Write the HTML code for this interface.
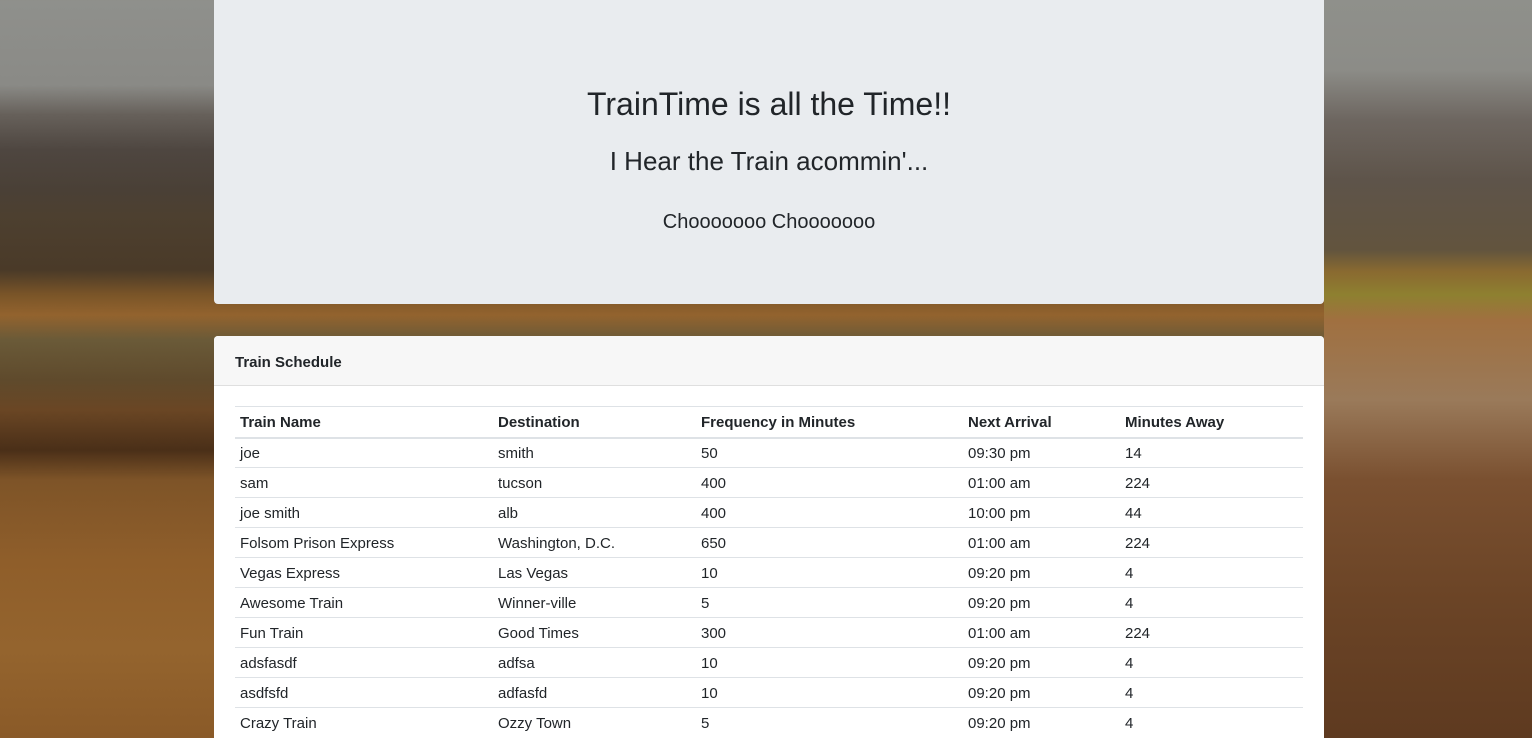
<!DOCTYPE html>
<html><head><meta charset="utf-8"><style>
*{box-sizing:border-box;margin:0;padding:0}
html,body{width:1532px;height:738px;overflow:hidden}
body{font-family:"Liberation Sans",sans-serif;color:#212529;position:relative;
background:linear-gradient(180deg,#8f908c 0px,#8a8a86 85px,#66605a 115px,#4e4640 150px,#4a4036 190px,#4d4030 215px,#4a3a28 270px,#7a5528 295px,#93632e 315px,#6a5a38 340px,#5f4a2c 380px,#6a4624 410px,#4a2f18 450px,#7e5428 480px,#8f5e2a 560px,#94642e 650px,#8a5a28 738px);}
.right{position:absolute;left:1324px;top:0;width:208px;height:738px;
background:linear-gradient(180deg,#8f908b 0,#8c8c87 70px,#6d6660 120px,#5e544a 180px,#62543e 250px,#8a6a30 272px,#8e8030 295px,#a07040 320px,#9a7a5a 400px,#7a5030 480px,#6b4426 600px,#5e3a20 738px)}
.jumbo{position:absolute;left:214px;top:0;width:1110px;height:304px;background:#e9ecef;border-radius:0 0 4px 4px;text-align:center}
.jumbo h1{position:absolute;top:86px;width:100%;font-size:32px;font-weight:500}
.jumbo h2{position:absolute;top:146px;width:100%;font-size:26px;font-weight:500}
.jumbo h5{position:absolute;top:211px;width:100%;font-size:20px;font-weight:500}
.card{position:absolute;left:214px;top:336px;width:1110px;height:420px;background:#fff;border-radius:4px 4px 0 0}
.ch{height:50px;background:#f7f7f7;border-bottom:1px solid #dfdfdf;padding:18px 21px 0;font-size:15px;font-weight:bold;border-radius:4px 4px 0 0}
table{position:absolute;left:21px;top:70px;width:1068px;border-collapse:collapse;font-size:15px}
td,th{height:30px;padding:2px 5px 0;text-align:left;border-top:1px solid #dee2e6;vertical-align:middle}
th{border-bottom:2px solid #dee2e6;height:31px}
</style></head><body>
<div class="right"></div>
<div class="jumbo"><h1>TrainTime is all the Time!!</h1><h2>I Hear the Train acommin'...</h2><h5>Chooooooo Chooooooo</h5></div>
<div class="card"><div class="ch">Train Schedule</div>
<table>
<colgroup><col style="width:258px"><col style="width:203px"><col style="width:267px"><col style="width:157px"><col></colgroup>
<tr><th>Train Name</th><th>Destination</th><th>Frequency in Minutes</th><th>Next Arrival</th><th>Minutes Away</th></tr>
<tr><td>joe</td><td>smith</td><td>50</td><td>09:30 pm</td><td>14</td></tr>
<tr><td>sam</td><td>tucson</td><td>400</td><td>01:00 am</td><td>224</td></tr>
<tr><td>joe smith</td><td>alb</td><td>400</td><td>10:00 pm</td><td>44</td></tr>
<tr><td>Folsom Prison Express</td><td>Washington, D.C.</td><td>650</td><td>01:00 am</td><td>224</td></tr>
<tr><td>Vegas Express</td><td>Las Vegas</td><td>10</td><td>09:20 pm</td><td>4</td></tr>
<tr><td>Awesome Train</td><td>Winner-ville</td><td>5</td><td>09:20 pm</td><td>4</td></tr>
<tr><td>Fun Train</td><td>Good Times</td><td>300</td><td>01:00 am</td><td>224</td></tr>
<tr><td>adsfasdf</td><td>adfsa</td><td>10</td><td>09:20 pm</td><td>4</td></tr>
<tr><td>asdfsfd</td><td>adfasfd</td><td>10</td><td>09:20 pm</td><td>4</td></tr>
<tr><td>Crazy Train</td><td>Ozzy Town</td><td>5</td><td>09:20 pm</td><td>4</td></tr>
</table></div>
</body></html>
